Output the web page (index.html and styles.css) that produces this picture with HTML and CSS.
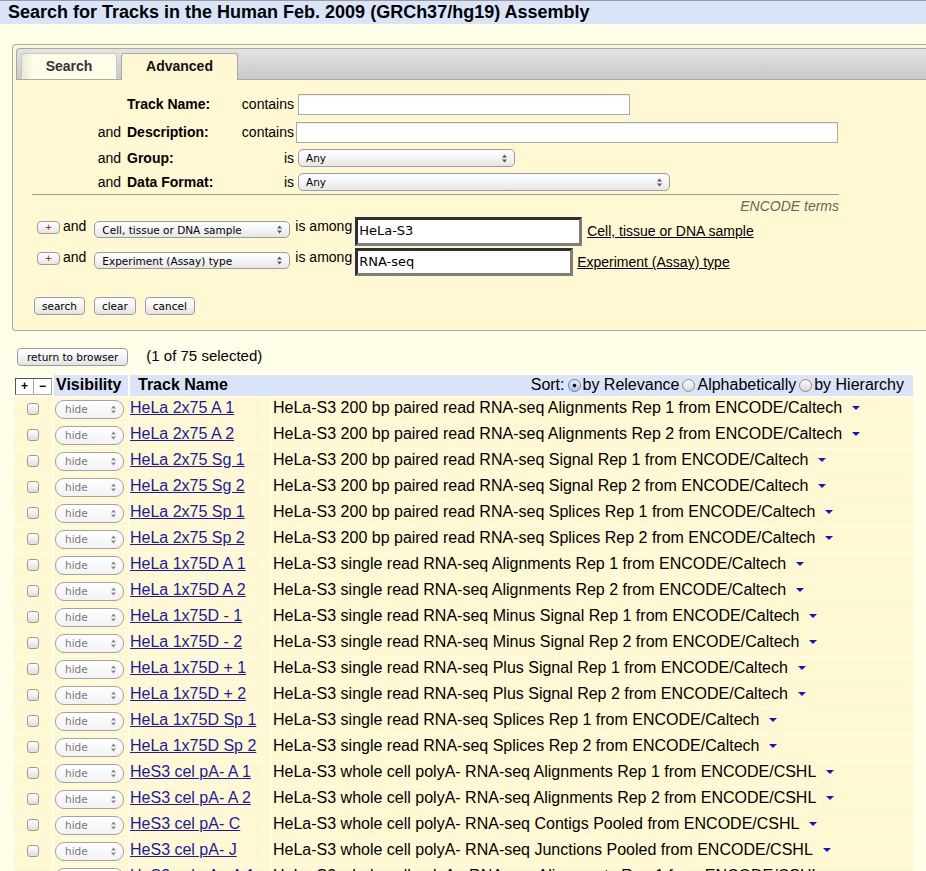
FILE: index.html
```html
<!DOCTYPE html>
<html>
<head>
<meta charset="utf-8">
<title>Search for Tracks</title>
<link rel="stylesheet" href="styles.css">
</head>
<body>
<div class="titlebar">Search for Tracks in the Human Feb. 2009 (GRCh37/hg19) Assembly</div>
<div class="main">
  <div class="box">
    <div class="tabbar">
      <div class="tab">Search</div>
      <div class="tab active">Advanced</div>
    </div>
    <div class="adv">
      <div class="grid">
        <span class="and"></span><span class="lbl">Track Name:</span><span class="op">contains</span><span class="fld"><input class="txt w332" type="text"></span>
        <span class="and">and</span><span class="lbl">Description:</span><span class="op">contains</span><span class="fld"><input class="txt w542" type="text"></span>
        <span class="and">and</span><span class="lbl">Group:</span><span class="op">is</span><span class="fld"><span class="sel w217"><select><option>Any</option></select><svg class="arr" width="5" height="9" viewBox="0 0 5 9"><path d="M2.5 0.5L5 3.5H0zM2.5 8.5L0 5.5H5z" fill="#555"/></svg></span></span>
        <span class="and">and</span><span class="lbl">Data Format:</span><span class="op">is</span><span class="fld"><span class="sel w372"><select><option>Any</option></select><svg class="arr" width="5" height="9" viewBox="0 0 5 9"><path d="M2.5 0.5L5 3.5H0zM2.5 8.5L0 5.5H5z" fill="#555"/></svg></span></span>
      </div>
      <div class="encode">
        <hr class="rule">
        <div class="encodehead">ENCODE terms</div>
      </div>
      <div class="term">
        <button class="plus">+</button>
        <span class="and2">and</span>
        <span class="sel wterm"><select><option>Cell, tissue or DNA sample</option></select><svg class="arr" width="5" height="9" viewBox="0 0 5 9"><path d="M2.5 0.5L5 3.5H0zM2.5 8.5L0 5.5H5z" fill="#555"/></svg></span>
        <span class="among">is among</span>
        <textarea class="ta w227" rows="1">HeLa-S3</textarea>
        <a class="termlink" href="#">Cell, tissue or DNA sample</a>
      </div>
      <div class="term second">
        <button class="plus">+</button>
        <span class="and2">and</span>
        <span class="sel wterm"><select><option>Experiment (Assay) type</option></select><svg class="arr" width="5" height="9" viewBox="0 0 5 9"><path d="M2.5 0.5L5 3.5H0zM2.5 8.5L0 5.5H5z" fill="#555"/></svg></span>
        <span class="among">is among</span>
        <textarea class="ta w218" rows="1">RNA-seq</textarea>
        <a class="termlink l2" href="#">Experiment (Assay) type</a>
      </div>
      <div class="btns">
        <button class="btn">search</button>
        <button class="btn">clear</button>
        <button class="btn">cancel</button>
      </div>
    </div>
  </div>

  <div class="resultsbar">
    <button class="btn wide">return to browser</button>
    <span class="count">(1 of 75 selected)</span>
  </div>

  <table class="tracks">
    <colgroup><col class="c1"><col class="c2"><col class="c3"><col class="c4"></colgroup>
    <thead>
      <tr>
        <th class="pm"><span class="pmbox"><span class="pmb">+</span><span class="pmb sep">−</span></span></th>
        <th class="vis">Visibility</th>
        <th class="tn" colspan="2"><div class="tnrow"><span>Track Name</span><span class="sort">Sort:<input class="radio on" type="radio" name="s" checked>by Relevance<input class="radio" type="radio" name="s">Alphabetically<input class="radio" type="radio" name="s">by Hierarchy</span></div></th>
      </tr>
    </thead>
    <tbody>
      <tr><td class="cb"><input type="checkbox"></td><td class="vsel"><span class="hide">hide<svg class="arr2" width="5" height="9" viewBox="0 0 5 9"><path d="M2.5 0.5L5 3.5H0zM2.5 8.5L0 5.5H5z" fill="#888"/></svg></span></td><td class="name"><a href="#">HeLa 2x75 A 1</a></td><td class="desc">HeLa-S3 200 bp paired read RNA-seq Alignments Rep 1 from ENCODE/Caltech<svg class="dd" width="8" height="4" viewBox="0 0 8 4"><path d="M0 0H8L4 4z" fill="#1515c8"/></svg></td></tr>
      <tr><td class="cb"><input type="checkbox"></td><td class="vsel"><span class="hide">hide<svg class="arr2" width="5" height="9" viewBox="0 0 5 9"><path d="M2.5 0.5L5 3.5H0zM2.5 8.5L0 5.5H5z" fill="#888"/></svg></span></td><td class="name"><a href="#">HeLa 2x75 A 2</a></td><td class="desc">HeLa-S3 200 bp paired read RNA-seq Alignments Rep 2 from ENCODE/Caltech<svg class="dd" width="8" height="4" viewBox="0 0 8 4"><path d="M0 0H8L4 4z" fill="#1515c8"/></svg></td></tr>
      <tr><td class="cb"><input type="checkbox"></td><td class="vsel"><span class="hide">hide<svg class="arr2" width="5" height="9" viewBox="0 0 5 9"><path d="M2.5 0.5L5 3.5H0zM2.5 8.5L0 5.5H5z" fill="#888"/></svg></span></td><td class="name"><a href="#">HeLa 2x75 Sg 1</a></td><td class="desc">HeLa-S3 200 bp paired read RNA-seq Signal Rep 1 from ENCODE/Caltech<svg class="dd" width="8" height="4" viewBox="0 0 8 4"><path d="M0 0H8L4 4z" fill="#1515c8"/></svg></td></tr>
      <tr><td class="cb"><input type="checkbox"></td><td class="vsel"><span class="hide">hide<svg class="arr2" width="5" height="9" viewBox="0 0 5 9"><path d="M2.5 0.5L5 3.5H0zM2.5 8.5L0 5.5H5z" fill="#888"/></svg></span></td><td class="name"><a href="#">HeLa 2x75 Sg 2</a></td><td class="desc">HeLa-S3 200 bp paired read RNA-seq Signal Rep 2 from ENCODE/Caltech<svg class="dd" width="8" height="4" viewBox="0 0 8 4"><path d="M0 0H8L4 4z" fill="#1515c8"/></svg></td></tr>
      <tr><td class="cb"><input type="checkbox"></td><td class="vsel"><span class="hide">hide<svg class="arr2" width="5" height="9" viewBox="0 0 5 9"><path d="M2.5 0.5L5 3.5H0zM2.5 8.5L0 5.5H5z" fill="#888"/></svg></span></td><td class="name"><a href="#">HeLa 2x75 Sp 1</a></td><td class="desc">HeLa-S3 200 bp paired read RNA-seq Splices Rep 1 from ENCODE/Caltech<svg class="dd" width="8" height="4" viewBox="0 0 8 4"><path d="M0 0H8L4 4z" fill="#1515c8"/></svg></td></tr>
      <tr><td class="cb"><input type="checkbox"></td><td class="vsel"><span class="hide">hide<svg class="arr2" width="5" height="9" viewBox="0 0 5 9"><path d="M2.5 0.5L5 3.5H0zM2.5 8.5L0 5.5H5z" fill="#888"/></svg></span></td><td class="name"><a href="#">HeLa 2x75 Sp 2</a></td><td class="desc">HeLa-S3 200 bp paired read RNA-seq Splices Rep 2 from ENCODE/Caltech<svg class="dd" width="8" height="4" viewBox="0 0 8 4"><path d="M0 0H8L4 4z" fill="#1515c8"/></svg></td></tr>
      <tr><td class="cb"><input type="checkbox"></td><td class="vsel"><span class="hide">hide<svg class="arr2" width="5" height="9" viewBox="0 0 5 9"><path d="M2.5 0.5L5 3.5H0zM2.5 8.5L0 5.5H5z" fill="#888"/></svg></span></td><td class="name"><a href="#">HeLa 1x75D A 1</a></td><td class="desc">HeLa-S3 single read RNA-seq Alignments Rep 1 from ENCODE/Caltech<svg class="dd" width="8" height="4" viewBox="0 0 8 4"><path d="M0 0H8L4 4z" fill="#1515c8"/></svg></td></tr>
      <tr><td class="cb"><input type="checkbox"></td><td class="vsel"><span class="hide">hide<svg class="arr2" width="5" height="9" viewBox="0 0 5 9"><path d="M2.5 0.5L5 3.5H0zM2.5 8.5L0 5.5H5z" fill="#888"/></svg></span></td><td class="name"><a href="#">HeLa 1x75D A 2</a></td><td class="desc">HeLa-S3 single read RNA-seq Alignments Rep 2 from ENCODE/Caltech<svg class="dd" width="8" height="4" viewBox="0 0 8 4"><path d="M0 0H8L4 4z" fill="#1515c8"/></svg></td></tr>
      <tr><td class="cb"><input type="checkbox"></td><td class="vsel"><span class="hide">hide<svg class="arr2" width="5" height="9" viewBox="0 0 5 9"><path d="M2.5 0.5L5 3.5H0zM2.5 8.5L0 5.5H5z" fill="#888"/></svg></span></td><td class="name"><a href="#">HeLa 1x75D - 1</a></td><td class="desc">HeLa-S3 single read RNA-seq Minus Signal Rep 1 from ENCODE/Caltech<svg class="dd" width="8" height="4" viewBox="0 0 8 4"><path d="M0 0H8L4 4z" fill="#1515c8"/></svg></td></tr>
      <tr><td class="cb"><input type="checkbox"></td><td class="vsel"><span class="hide">hide<svg class="arr2" width="5" height="9" viewBox="0 0 5 9"><path d="M2.5 0.5L5 3.5H0zM2.5 8.5L0 5.5H5z" fill="#888"/></svg></span></td><td class="name"><a href="#">HeLa 1x75D - 2</a></td><td class="desc">HeLa-S3 single read RNA-seq Minus Signal Rep 2 from ENCODE/Caltech<svg class="dd" width="8" height="4" viewBox="0 0 8 4"><path d="M0 0H8L4 4z" fill="#1515c8"/></svg></td></tr>
      <tr><td class="cb"><input type="checkbox"></td><td class="vsel"><span class="hide">hide<svg class="arr2" width="5" height="9" viewBox="0 0 5 9"><path d="M2.5 0.5L5 3.5H0zM2.5 8.5L0 5.5H5z" fill="#888"/></svg></span></td><td class="name"><a href="#">HeLa 1x75D + 1</a></td><td class="desc">HeLa-S3 single read RNA-seq Plus Signal Rep 1 from ENCODE/Caltech<svg class="dd" width="8" height="4" viewBox="0 0 8 4"><path d="M0 0H8L4 4z" fill="#1515c8"/></svg></td></tr>
      <tr><td class="cb"><input type="checkbox"></td><td class="vsel"><span class="hide">hide<svg class="arr2" width="5" height="9" viewBox="0 0 5 9"><path d="M2.5 0.5L5 3.5H0zM2.5 8.5L0 5.5H5z" fill="#888"/></svg></span></td><td class="name"><a href="#">HeLa 1x75D + 2</a></td><td class="desc">HeLa-S3 single read RNA-seq Plus Signal Rep 2 from ENCODE/Caltech<svg class="dd" width="8" height="4" viewBox="0 0 8 4"><path d="M0 0H8L4 4z" fill="#1515c8"/></svg></td></tr>
      <tr><td class="cb"><input type="checkbox"></td><td class="vsel"><span class="hide">hide<svg class="arr2" width="5" height="9" viewBox="0 0 5 9"><path d="M2.5 0.5L5 3.5H0zM2.5 8.5L0 5.5H5z" fill="#888"/></svg></span></td><td class="name"><a href="#">HeLa 1x75D Sp 1</a></td><td class="desc">HeLa-S3 single read RNA-seq Splices Rep 1 from ENCODE/Caltech<svg class="dd" width="8" height="4" viewBox="0 0 8 4"><path d="M0 0H8L4 4z" fill="#1515c8"/></svg></td></tr>
      <tr><td class="cb"><input type="checkbox"></td><td class="vsel"><span class="hide">hide<svg class="arr2" width="5" height="9" viewBox="0 0 5 9"><path d="M2.5 0.5L5 3.5H0zM2.5 8.5L0 5.5H5z" fill="#888"/></svg></span></td><td class="name"><a href="#">HeLa 1x75D Sp 2</a></td><td class="desc">HeLa-S3 single read RNA-seq Splices Rep 2 from ENCODE/Caltech<svg class="dd" width="8" height="4" viewBox="0 0 8 4"><path d="M0 0H8L4 4z" fill="#1515c8"/></svg></td></tr>
      <tr><td class="cb"><input type="checkbox"></td><td class="vsel"><span class="hide">hide<svg class="arr2" width="5" height="9" viewBox="0 0 5 9"><path d="M2.5 0.5L5 3.5H0zM2.5 8.5L0 5.5H5z" fill="#888"/></svg></span></td><td class="name"><a href="#">HeS3 cel pA- A 1</a></td><td class="desc">HeLa-S3 whole cell polyA- RNA-seq Alignments Rep 1 from ENCODE/CSHL<svg class="dd" width="8" height="4" viewBox="0 0 8 4"><path d="M0 0H8L4 4z" fill="#1515c8"/></svg></td></tr>
      <tr><td class="cb"><input type="checkbox"></td><td class="vsel"><span class="hide">hide<svg class="arr2" width="5" height="9" viewBox="0 0 5 9"><path d="M2.5 0.5L5 3.5H0zM2.5 8.5L0 5.5H5z" fill="#888"/></svg></span></td><td class="name"><a href="#">HeS3 cel pA- A 2</a></td><td class="desc">HeLa-S3 whole cell polyA- RNA-seq Alignments Rep 2 from ENCODE/CSHL<svg class="dd" width="8" height="4" viewBox="0 0 8 4"><path d="M0 0H8L4 4z" fill="#1515c8"/></svg></td></tr>
      <tr><td class="cb"><input type="checkbox"></td><td class="vsel"><span class="hide">hide<svg class="arr2" width="5" height="9" viewBox="0 0 5 9"><path d="M2.5 0.5L5 3.5H0zM2.5 8.5L0 5.5H5z" fill="#888"/></svg></span></td><td class="name"><a href="#">HeS3 cel pA- C</a></td><td class="desc">HeLa-S3 whole cell polyA- RNA-seq Contigs Pooled from ENCODE/CSHL<svg class="dd" width="8" height="4" viewBox="0 0 8 4"><path d="M0 0H8L4 4z" fill="#1515c8"/></svg></td></tr>
      <tr><td class="cb"><input type="checkbox"></td><td class="vsel"><span class="hide">hide<svg class="arr2" width="5" height="9" viewBox="0 0 5 9"><path d="M2.5 0.5L5 3.5H0zM2.5 8.5L0 5.5H5z" fill="#888"/></svg></span></td><td class="name"><a href="#">HeS3 cel pA- J</a></td><td class="desc">HeLa-S3 whole cell polyA- RNA-seq Junctions Pooled from ENCODE/CSHL<svg class="dd" width="8" height="4" viewBox="0 0 8 4"><path d="M0 0H8L4 4z" fill="#1515c8"/></svg></td></tr>
      <tr><td class="cb"><input type="checkbox"></td><td class="vsel"><span class="hide">hide<svg class="arr2" width="5" height="9" viewBox="0 0 5 9"><path d="M2.5 0.5L5 3.5H0zM2.5 8.5L0 5.5H5z" fill="#888"/></svg></span></td><td class="name"><a href="#">HeS3 cel pA+ A 1</a></td><td class="desc">HeLa-S3 whole cell polyA+ RNA-seq Alignments Rep 1 from ENCODE/CSHL<svg class="dd" width="8" height="4" viewBox="0 0 8 4"><path d="M0 0H8L4 4z" fill="#1515c8"/></svg></td></tr>
    </tbody>
  </table>
</div>
</body>
</html>
```
FILE: styles.css
```css
html, body {
  margin: 0;
  padding: 0;
}
body {
  background: #fffee8;
  font-family: "Liberation Sans", Arial, Helvetica, sans-serif;
  font-size: 14px;
  color: #000;
}
.titlebar {
  border-top: 1px solid #9c9c9c;
  background: #d9e4f8;
  height: 23px;
  line-height: 23px;
  padding-left: 8px;
  font-size: 18px;
  font-weight: bold;
  white-space: nowrap;
}
.main {
  padding: 20px 0 0 12px;
}
.box {
  border: 1px solid #a9a9a9;
  border-right: none;
  border-radius: 4px 0 0 4px;
  background: #fff8d2;
  padding: 3px 0 15px 3px;
}
.tabbar {
  display: flex;
  gap: 4px;
  height: 26px;
  padding: 4px 0 0 4px;
  border: 1px solid #a9a9a9;
  border-right: none;
  border-radius: 4px 0 0 0;
  background: linear-gradient(#e3e3e3, #c8c8c8);
}
.tab {
  box-sizing: border-box;
  width: 96px;
  height: 26px;
  line-height: 25px;
  text-align: center;
  font-weight: bold;
  font-size: 14px;
  color: #333;
  border: 1px solid #c8c8c8;
  border-bottom: none;
  border-radius: 3px 3px 0 0;
  background: linear-gradient(90deg, #e9e7d8, #fffde8 12%, #fffde8);
}
.tab.active {
  width: 117px;
  height: 27px;
  color: #111;
  border-color: #a9a9a9;
  background: #fff8d2;
  margin-bottom: -1px;
}
.grid {
  display: grid;
  grid-template-columns: 64px 108px 53px 1fr;
  grid-template-rows: 28px 28px 24px 24px;
  column-gap: 6px;
  align-items: center;
  margin: 10px 0 0 41px;
}
.grid .and {
  text-align: right;
}
.grid .lbl {
  font-weight: bold;
}
.grid .op {
  text-align: right;
}
.grid .fld {
  margin-left: -3px;
  display: flex;
  align-items: center;
}
.txt {
  box-sizing: border-box;
  height: 21px;
  border: 1px solid #a8a8a8;
  box-shadow: inset 0 1px 1px rgba(0, 0, 0, 0.08);
  background: #fff;
  margin: 0;
  padding: 1px 3px;
}
.w332 { width: 332px; margin-left: 1px; }
.w542 { width: 542px; margin-left: -1px; }
.sel {
  position: relative;
  display: inline-block;
  vertical-align: top;
}
.sel select {
  -webkit-appearance: none;
  appearance: none;
  box-sizing: border-box;
  display: block;
  width: 100%;
  height: 18px;
  margin: 0;
  padding: 0 0 0 7px;
  border: 1px solid #9c9c9c;
  border-radius: 5px;
  background: linear-gradient(#ffffff, #f4f4f4 50%, #e6e6e6);
  font-family: "DejaVu Sans", Verdana, sans-serif;
  font-size: 10.5px;
  color: #000;
}
.sel .arr {
  position: absolute;
  right: 8px;
  top: 50%;
  margin-top: -4.5px;
  pointer-events: none;
}
.w217 { width: 217px; margin-left: 1px; }
.w372 { width: 372px; margin-left: 1px; }
.encode {
  margin-left: 16px;
  width: 807px;
}
.rule {
  border: 0;
  border-top: 1px solid #9c9c9c;
  margin: 0;
  height: 0;
}
.encodehead {
  margin-top: 3px;
  line-height: 17px;
  text-align: right;
  font-style: italic;
  color: #666;
}
.term {
  display: flex;
  align-items: flex-start;
  margin: 2px 0 0 21px;
  height: 29px;
}
.term.second {
  height: 28px;
}
.plus {
  box-sizing: border-box;
  width: 23px;
  height: 13px;
  margin: 4px 0 0 0;
  padding: 0;
  border: 1px solid #9c9c9c;
  border-radius: 4px;
  background: linear-gradient(#ffffff, #e6e6e6);
  color: #7a1b1b;
  font-family: "DejaVu Sans", sans-serif;
  font-size: 9px;
  line-height: 11px;
}
.and2 {
  margin: 1px 0 0 3px;
  line-height: 16px;
}
.wterm {
  width: 196px;
  margin: 4px 0 0 8px;
}
.wterm select {
  height: 17px;
  padding-left: 7px;
}
.among {
  margin: 1px 0 0 5px;
  line-height: 16px;
}
.ta {
  box-sizing: border-box;
  height: 29px;
  margin: 0 0 0 3px;
  padding: 3px 1px 0 1px;
  border-style: solid;
  border-width: 3px;
  border-color: #2f2f2f #7d7d7d #7d7d7d #2f2f2f;
  background: #fff;
  resize: none;
  overflow: hidden;
  font-family: "DejaVu Sans", Verdana, sans-serif;
  font-size: 13px;
  line-height: 16px;
  color: #000;
}
.term.second .ta {
  height: 28px;
}
.w227 { width: 227px; }
.w218 { width: 218px; }
.termlink {
  margin: 6px 0 0 5px;
  line-height: 16px;
  color: #000;
  text-decoration: underline;
}
.termlink.l2 {
  margin-left: 4px;
}
.btns {
  display: flex;
  gap: 9px;
  margin: 21px 0 0 18px;
}
.btn {
  box-sizing: border-box;
  height: 18px;
  margin: 0;
  padding: 0 7px;
  border: 1px solid #9c9c9c;
  border-radius: 4px;
  background: linear-gradient(#ffffff, #f3f3f3 50%, #e3e3e3);
  font-family: "DejaVu Sans", Verdana, sans-serif;
  font-size: 10.5px;
  line-height: 15px;
  color: #000;
}
.btn.wide {
  padding: 0 9px;
}
.resultsbar {
  display: flex;
  align-items: center;
  height: 18px;
  margin: 17px 0 0 5px;
}
.count {
  margin: 0 0 4px 18px;
  font-size: 15px;
}
.tracks {
  table-layout: fixed;
  border-collapse: separate;
  border-spacing: 2px 1px;
  width: 903px;
  margin-top: 8px;
}
.c1 { width: 38px; }
.c2 { width: 74px; }
.c3 { width: 140px; }
.c4 { width: 641px; }
.tracks thead tr {
  height: 21px;
}
.tracks th {
  padding: 0;
  text-align: left;
  font-size: 16px;
  line-height: 18px;
  white-space: nowrap;
}
.tracks th.pm {
  background: transparent;
}
.pmbox {
  display: inline-flex;
  margin-left: 1px;
  border: 1px solid #555;
  border-right-color: #aaa;
  border-bottom-color: #aaa;
  background: #fff;
  vertical-align: middle;
}
.pmb {
  width: 17px;
  height: 15px;
  line-height: 15px;
  text-align: center;
  font-size: 12px;
  font-weight: bold;
}
.pmb.sep {
  border-left: 1px solid #aaa;
}
.tracks th.vis {
  background: #d9e4f8;
  padding: 0 0 2px 2px;
}
.tracks th.tn {
  background: #d9e4f8;
  padding: 0 9px 2px 8px;
}
.tnrow {
  display: flex;
  justify-content: space-between;
  align-items: center;
}
.sort {
  font-weight: normal;
  display: flex;
  align-items: center;
}
.radio {
  -webkit-appearance: none;
  appearance: none;
  box-sizing: border-box;
  width: 13px;
  height: 13px;
  margin: 2px 2px 0 3px;
  border: 1px solid #8c8c8c;
  border-radius: 50%;
  background: linear-gradient(#fbfbfb, #d8d8d8);
}
.radio.on {
  border-color: #5d7ea6;
  background: radial-gradient(circle, #1c1c1c 0 1.6px, transparent 2.2px), linear-gradient(#e2eefa, #a8c8ea);
}
.tracks tbody tr {
  height: 25px;
}
.tracks td {
  padding: 0;
  background: #fff8d2;
  vertical-align: middle;
  font-size: 16px;
  line-height: 18px;
  white-space: nowrap;
  overflow: hidden;
}
.tracks td.cb input {
  -webkit-appearance: none;
  appearance: none;
  display: block;
  box-sizing: border-box;
  width: 12px;
  height: 12px;
  margin: 0 auto 1px;
  border: 1px solid #9a9a9a;
  border-radius: 3px;
  background: linear-gradient(#ffffff, #dedede);
}
.tracks td.vsel {
  padding-left: 1px;
}
.hide {
  position: relative;
  box-sizing: border-box;
  display: block;
  width: 69px;
  height: 19px;
  padding-left: 9px;
  border: 1px solid #a3a3a3;
  border-radius: 9px;
  background: linear-gradient(#ffffff, #f2f2f2);
  font-family: "DejaVu Sans", Verdana, sans-serif;
  font-size: 10.5px;
  line-height: 17px;
  color: #7a7a7a;
}
.arr2 {
  position: absolute;
  right: 7px;
  top: 4px;
}
.tracks td.name {
  padding-bottom: 4px;
}
.tracks td.name a {
  color: #1a1aa6;
  text-decoration: underline;
}
.tracks td.desc {
  padding: 0 0 4px 1px;
}
.dd {
  margin-left: 10px;
  vertical-align: 3px;
}
```
